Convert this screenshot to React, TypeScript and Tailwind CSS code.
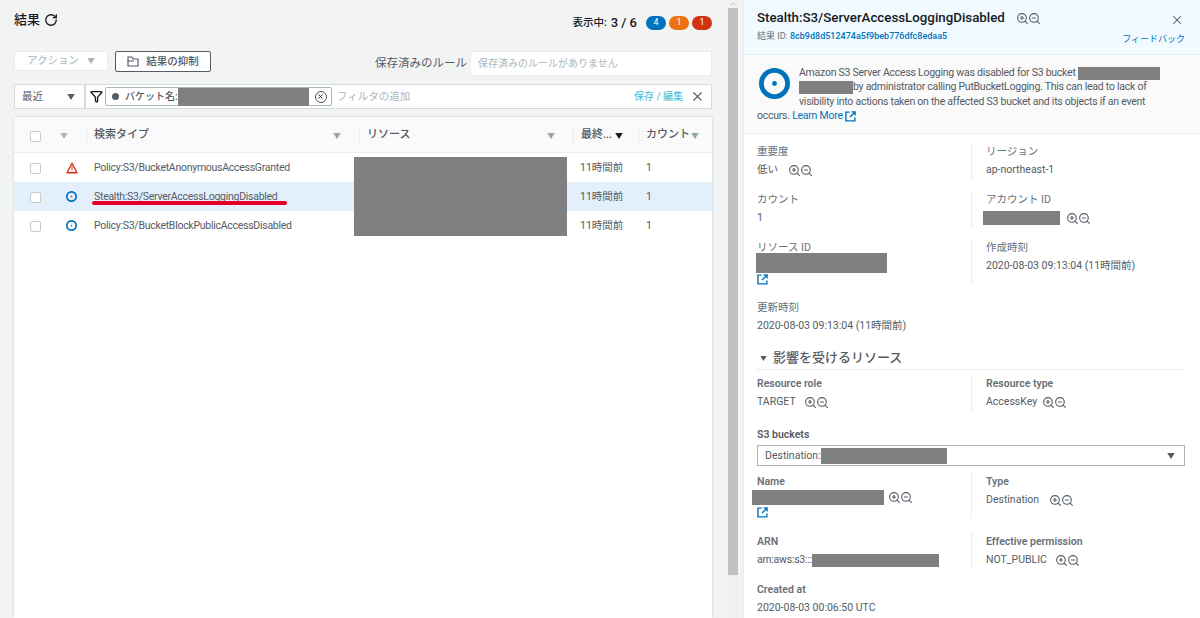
import type { ReactNode } from "react";
import { ChevronDown, Filter, RotateCw, X, ZoomIn, ZoomOut } from "lucide-react";

function Caret({ className }: { className: string }) {
  return (
    <svg viewBox="0 0 10 8" className={className} fill="currentColor">
      <path d="M0 0h10L5 8z" />
    </svg>
  );
}

function Checkbox() {
  return <span className="mt-[1px] block h-[11px] w-[11px] rounded-[2px] border border-[#c4cdcd] bg-white" />;
}

function Info({ className }: { className: string }) {
  return (
    <svg viewBox="0 0 32 32" className={className} fill="none">
      <circle cx="16" cy="16" r="13.5" stroke="#0073bb" strokeWidth="5" />
      <circle cx="16" cy="16" r="2.5" fill="#0073bb" />
    </svg>
  );
}

function Warning() {
  return (
    <svg viewBox="0 0 12 12" className="h-[12px] w-[12px]" fill="none">
      <path d="M6 1.2 11 10.8H1z" stroke="#d13212" strokeWidth="1.4" strokeLinejoin="round" />
      <path d="M6 4.6v3M6 8.4v1" stroke="#d13212" strokeWidth="1.1" />
    </svg>
  );
}

function External({ className }: { className: string }) {
  return (
    <svg viewBox="0 0 12 12" className={className} fill="none" stroke="#0073bb" strokeWidth="1.5">
      <path d="M5 1.2H1v9.6h9.8V7" />
      <path d="M7 1h4v4M11 1 5.5 6.5" />
    </svg>
  );
}

function Zooms({ className = "" }: { className?: string }) {
  return (
    <span className={`inline-flex items-center text-[#545b64] ${className}`}>
      <ZoomIn size={13} strokeWidth={2} />
      <ZoomOut size={13} strokeWidth={2} className="-ml-[1px]" />
    </span>
  );
}

function Redacted({ className }: { className: string }) {
  return <span className={`block bg-[#808080] ${className}`} />;
}

type FieldProps = {
  label: string;
  bold?: boolean;
  children: ReactNode;
};

function Field({ label, bold, children }: FieldProps) {
  return (
    <div className="min-h-[36px]">
      <div className={`text-[10.5px] leading-[17px] text-[#687078] ${bold ? "font-semibold" : ""}`}>{label}</div>
      <div className="mt-[1px] flex min-h-[18px] items-center text-[10.5px] leading-[18px] text-[#545b64]">{children}</div>
    </div>
  );
}

function FieldRow({ left, right, className = "" }: { left: ReactNode; right?: ReactNode; className?: string }) {
  return (
    <div className={`grid grid-cols-[214px_1fr] ${className}`}>
      <div>{left}</div>
      {right ? <div className="border-l border-[#eaeded] pl-[14px]">{right}</div> : null}
    </div>
  );
}

const rows = [
  { name: "Policy:S3/BucketAnonymousAccessGranted", warn: true, selected: false },
  { name: "Stealth:S3/ServerAccessLoggingDisabled", warn: false, selected: true },
  { name: "Policy:S3/BucketBlockPublicAccessDisabled", warn: false, selected: false },
];

function ResultsPanel() {
  return (
    <div className="flex h-full w-[726px] shrink-0 flex-col bg-[#f2f3f3] pl-[14px] pr-[14px]">
      <div className="flex h-[51px] items-start justify-between pt-[11px]">
        <div className="flex items-center gap-[4px] text-[13px] font-medium leading-[18px] text-[#16191f]">
          結果
          <RotateCw size={14} strokeWidth={2.2} />
        </div>
        <div className="flex items-center pt-[2px]">
          <span className="text-[10.5px] font-medium text-[#16191f]">表示中:</span>
          <span className="ml-[4px] text-[13px] font-medium text-[#16191f]">3 / 6</span>
          <div className="ml-[9px] flex gap-[3px]">
            <span className="flex h-[14px] w-[20px] items-center justify-center rounded-full bg-[#0073bb] text-[9px] text-white">4</span>
            <span className="flex h-[14px] w-[20px] items-center justify-center rounded-full bg-[#ec7211] text-[9px] text-white">1</span>
            <span className="flex h-[14px] w-[20px] items-center justify-center rounded-full bg-[#d13212] text-[9px] text-white">1</span>
          </div>
        </div>
      </div>

      <div className="flex h-[33px] items-start">
        <div className="flex h-[20px] w-[94px] items-center justify-center gap-[8px] rounded-[2px] border border-[#eaeded] bg-white text-[10.5px] text-[#aab7b8]">
          アクション
          <Caret className="h-[6px] w-[8px] text-[#aab7b8]" />
        </div>
        <div className="ml-[7px] flex h-[21px] w-[96px] items-center justify-center gap-[7px] rounded-[2px] border border-[#545b64] bg-white text-[10.5px] font-medium text-[#545b64]">
          <svg viewBox="0 0 12 11" className="h-[11px] w-[12px]" fill="none" stroke="#545b64" strokeWidth="1.2">
            <path d="M1 10V1h4l1 2h5v7zM1 5h6" />
          </svg>
          結果の抑制
        </div>
        <div className="ml-auto flex items-center">
          <span className="mr-[3px] text-[11.5px] text-[#545b64]">保存済みのルール</span>
          <div className="flex h-[25px] w-[242px] items-center rounded-[2px] border border-[#eaeded] bg-white pl-[7px] text-[10px] text-[#aab7b8]">
            保存済みのルールがありません
          </div>
        </div>
      </div>

      <div className="flex h-[25px] items-center border border-[#d5dbdb] bg-white">
        <div className="flex h-full w-[71px] items-center justify-between border-r-2 border-[#d5dbdb] pl-[7px] pr-[9px] text-[10.5px] text-[#545b64]">
          最近
          <Caret className="h-[6px] w-[8px] text-[#545b64]" />
        </div>
        <Filter size={13} strokeWidth={2.5} className="ml-[4px] text-[#16191f]" />
        <div className="ml-[2px] flex h-[19px] w-[227px] items-center rounded-[2px] border border-[#aab7b8] pl-[6px] text-[10px] text-[#545b64]">
          <span className="h-[7px] w-[7px] rounded-full bg-[#545b64]" />
          <span className="ml-[6px] font-medium">バケット名:</span>
          <Redacted className="h-[18px] w-[131px]" />
          <span className="ml-[6px] flex h-[12px] w-[12px] items-center justify-center rounded-full border-[1.5px] border-[#545b64] text-[#16191f]">
            <X size={7} strokeWidth={3} />
          </span>
        </div>
        <span className="ml-[5px] text-[10.5px] text-[#aab7b8]">フィルタの追加</span>
        <span className="ml-auto text-[10px] text-[#44b9d6]">保存 / 編集</span>
        <X size={15} strokeWidth={1.8} className="ml-[7px] mr-[6px] text-[#545b64]" />
      </div>

      <div className="relative mt-[8px] flex-1 bg-white shadow-[0_0_2px_rgba(0,28,36,0.2)]">
        <div className="grid h-[36px] grid-cols-[36px_36px_273px_214px_65px_74px] items-center border-b border-[#eaeded] bg-[#fafafa] pt-[2px] text-[11px] font-medium text-[#545b64]">
          <div className="pl-[16px]">
            <Checkbox />
          </div>
          <div className="pl-[10px]">
            <Caret className="h-[6px] w-[8px] text-[#aab7b8]" />
          </div>
          <div className="flex h-[16px] items-center justify-between border-l border-[#eaeded] pl-[7px] pr-[18px]">
            検索タイプ
            <Caret className="h-[6px] w-[8px] text-[#95a5a6]" />
          </div>
          <div className="flex h-[16px] items-center justify-between border-l border-[#eaeded] pl-[7px] pr-[18px]">
            リソース
            <Caret className="h-[6px] w-[8px] text-[#95a5a6]" />
          </div>
          <div className="flex h-[16px] items-center gap-[3px] border-l border-[#eaeded] pl-[7px]">
            最終...
            <Caret className="h-[6px] w-[8px] text-[#16191f]" />
          </div>
          <div className="flex h-[16px] items-center gap-[1px] border-l border-[#eaeded] pl-[7px]">
            カウント
            <Caret className="h-[6px] w-[8px] text-[#95a5a6]" />
          </div>
        </div>
        {rows.map((row) => (
          <div
            key={row.name}
            className={`grid h-[29px] grid-cols-[36px_36px_273px_214px_65px_74px] items-center text-[10.5px] text-[#545b64] ${row.selected ? "bg-[#e3f0fb]" : "bg-white"}`}
          >
            <div className="pl-[16px]">
              <Checkbox />
            </div>
            <div className="pl-[16px]">{row.warn ? <Warning /> : <Info className="h-[11px] w-[11px]" />}</div>
            <div className="pl-[8px] tracking-[-0.27px]">{row.name}</div>
            <div />
            <div className="pl-[7px]">11時間前</div>
            <div className="pl-[8px]">1</div>
          </div>
        ))}
        <Redacted className="absolute left-[340px] top-[40px] h-[79px] w-[213px]" />
        <span className="absolute left-[78px] top-[84px] h-[4px] w-[195px] rounded-full bg-[#e60026]" />
      </div>
    </div>
  );
}

function DetailPanel() {
  return (
    <div className="h-full flex-1 border-l border-[#eaeded] bg-white">
      <div className="flex h-[55px] items-start justify-between border-b border-[#eaeded] bg-[#f1faff] pl-[13px] pr-[15px] pt-[9px]">
        <div>
          <div className="flex items-center text-[13.3px] font-medium leading-[18px] text-[#16191f]">
            Stealth:S3/ServerAccessLoggingDisabled
            <Zooms className="ml-[11px]" />
          </div>
          <div className="mt-[2px] text-[9px] leading-[14px] text-[#687078]">
            結果 ID: <span className="font-medium text-[#0073bb]">8cb9d8d512474a5f9beb776dfc8edaa5</span>
          </div>
        </div>
        <div className="flex flex-col items-end">
          <X size={14} strokeWidth={1.8} className="mt-[4px] mr-[1px] text-[#545b64]" />
          <span className="mt-[5px] text-[9px] leading-[14px] text-[#0073bb]">フィードバック</span>
        </div>
      </div>

      <div className="h-[79px] border-b border-[#eaeded] bg-[#fafafa] pl-[13px] pr-[24px] pt-[11px] text-[10.5px] leading-[14.3px] tracking-[-0.25px] text-[#545b64]">
        <Info className="float-left ml-[2px] mr-[9px] mt-[2px] h-[31px] w-[31px]" />
        Amazon S3 Server Access Logging was disabled for S3 bucket{" "}
        <span className="inline-block h-[13px] w-[82px] bg-[#808080] align-middle" />{" "}
        <span className="inline-block h-[13px] w-[54px] bg-[#808080] align-middle" />
        by administrator calling PutBucketLogging. This can lead to lack of visibility into actions taken on the affected S3 bucket and its objects if an event occurs.{" "}
        <span className="text-[#0073bb]">Learn More</span>{" "}
        <External className="inline h-[11px] w-[11px]" />
      </div>

      <div className="pl-[13px] pr-[15px] pt-[9px]">
        <FieldRow
          left={<Field label="重要度">低い<Zooms className="ml-[10px]" /></Field>}
          right={<Field label="リージョン">ap-northeast-1</Field>}
        />
        <FieldRow
          className="mt-[12px]"
          left={<Field label="カウント">1</Field>}
          right={<Field label="アカウント ID"><Redacted className="-ml-[3px] h-[14px] w-[77px]" /><Zooms className="ml-[6px]" /></Field>}
        />
        <FieldRow
          className="mt-[12px]"
          left={
            <Field label="リソース ID">
              <div className="-mt-[4px]">
                <Redacted className="-ml-[1px] h-[20px] w-[131px]" />
                <External className="mt-[1px] h-[11px] w-[11px]" />
              </div>
            </Field>
          }
          right={<Field label="作成時刻">2020-08-03 09:13:04 (11時間前)</Field>}
        />
        <div className="mt-[14px]">
          <Field label="更新時刻">2020-08-03 09:13:04 (11時間前)</Field>
        </div>

        <div className="mt-[13px] flex h-[22px] items-center gap-[6px] border-b border-[#eaeded] pb-[1px] pl-[3px] text-[13px] font-medium text-[#545b64]">
          <Caret className="h-[5px] w-[7px] text-[#545b64]" />
          影響を受けるリソース
        </div>

        <FieldRow
          className="mt-[5px]"
          left={<Field label="Resource role" bold>TARGET<Zooms className="ml-[8px]" /></Field>}
          right={<Field label="Resource type" bold>AccessKey<Zooms className="ml-[5px]" /></Field>}
        />

        <div className="mt-[15px] text-[10.5px] font-semibold leading-[17px] text-[#545b64]">S3 buckets</div>
        <div className="mt-[2px] flex h-[21px] items-center justify-between border border-[#aab7b8] bg-white pl-[7px] pr-[9px] text-[10.5px] text-[#545b64]">
          <span className="flex items-center">
            Destination:
            <Redacted className="h-[16px] w-[126px]" />
          </span>
          <Caret className="h-[6px] w-[8px] text-[#545b64]" />
        </div>

        <FieldRow
          className="mt-[7px]"
          left={
            <Field label="Name" bold>
              <div className="-mt-[1px]">
                <div className="flex items-center">
                  <Redacted className="-ml-[5px] h-[15px] w-[132px]" />
                  <Zooms className="ml-[4px]" />
                </div>
                <External className="mt-[2px] h-[11px] w-[11px]" />
              </div>
            </Field>
          }
          right={<Field label="Type" bold>Destination<Zooms className="ml-[10px]" /></Field>}
        />
        <FieldRow
          className="mt-[15px]"
          left={
            <Field label="ARN" bold>
              <span className="tracking-[-0.25px]">arn:aws:s3:::</span>
              <Redacted className="h-[13px] w-[127px]" />
            </Field>
          }
          right={<Field label="Effective permission" bold>NOT_PUBLIC<Zooms className="ml-[8px]" /></Field>}
        />
        <div className="mt-[12px]">
          <Field label="Created at" bold>2020-08-03 00:06:50 UTC</Field>
        </div>
      </div>
    </div>
  );
}

export default function App() {
  return (
    <div className="flex h-[618px] w-[1200px] overflow-hidden bg-[#f2f3f3] font-['Roboto','Noto_Sans_CJK_JP',sans-serif]">
      <ResultsPanel />
      <div className="mx-[2px] flex h-full w-[10px] shrink-0 flex-col items-center bg-[#f1f1f1]">
        <ChevronDown size={8} className="rotate-180 text-[#a0a0a0]" />
        <div className="h-[567px] w-full bg-[#c1c1c1]" />
      </div>
      <div className="w-[3px] shrink-0" />
      <DetailPanel />
    </div>
  );
}
